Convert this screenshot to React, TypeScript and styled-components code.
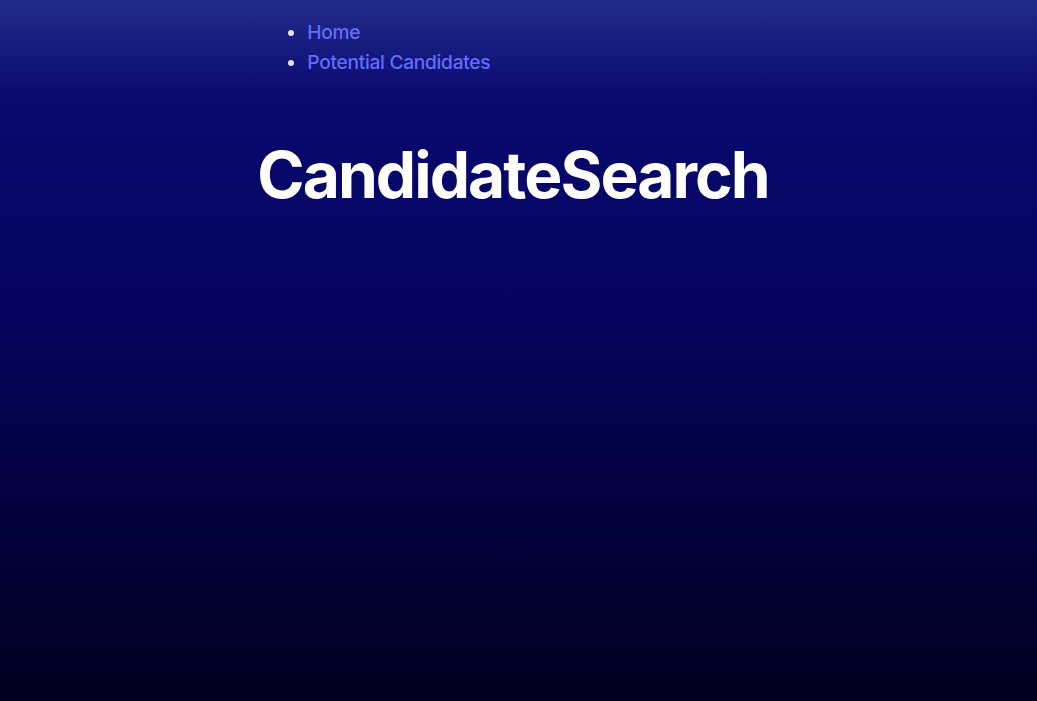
import React from "react";
import styled, { createGlobalStyle } from "styled-components";

const Global = createGlobalStyle`
  html, body { margin: 0; padding: 0; }
  body {
    min-height: 701px;
    font-family: Inter, "Noto Sans", sans-serif;
    color: rgba(255, 255, 255, 0.87);
    background: linear-gradient(to bottom, #222b8a 0px, #09096f 100px, #050560 300px, #000020 701px);
    background-repeat: no-repeat;
    -webkit-font-smoothing: antialiased;
  }
`;

const Page = styled.div`
  min-height: 701px;
  display: flex;
  flex-direction: column;
  align-items: center;
  padding-right: 11px;
  box-sizing: border-box;
`;

const Column = styled.div`
  display: flex;
  flex-direction: column;
`;

const NavList = styled.ul`
  margin: 17px 0 0;
  padding-left: 50px;
  list-style: disc;
  font-size: 19.2px;
  line-height: 30px;
`;

const NavItem = styled.li`
  color: rgba(255, 255, 255, 0.87);
`;

const NavLink = styled.a`
  color: #646cff;
  text-decoration: none;
  font-weight: 450;
  letter-spacing: -0.3px;
`;

const Title = styled.h1`
  margin: 63px 0 0;
  font-size: 64px;
  line-height: 70px;
  font-weight: 700;
  letter-spacing: -0.03em;
  color: #ffffff;
  text-align: center;
`;

export default function App() {
  return (
    <>
      <Global />
      <Page>
        <Column>
          <NavList>
            <NavItem><NavLink href="#">Home</NavLink></NavItem>
            <NavItem><NavLink href="#">Potential Candidates</NavLink></NavItem>
          </NavList>
          <Title>CandidateSearch</Title>
        </Column>
      </Page>
    </>
  );
}
